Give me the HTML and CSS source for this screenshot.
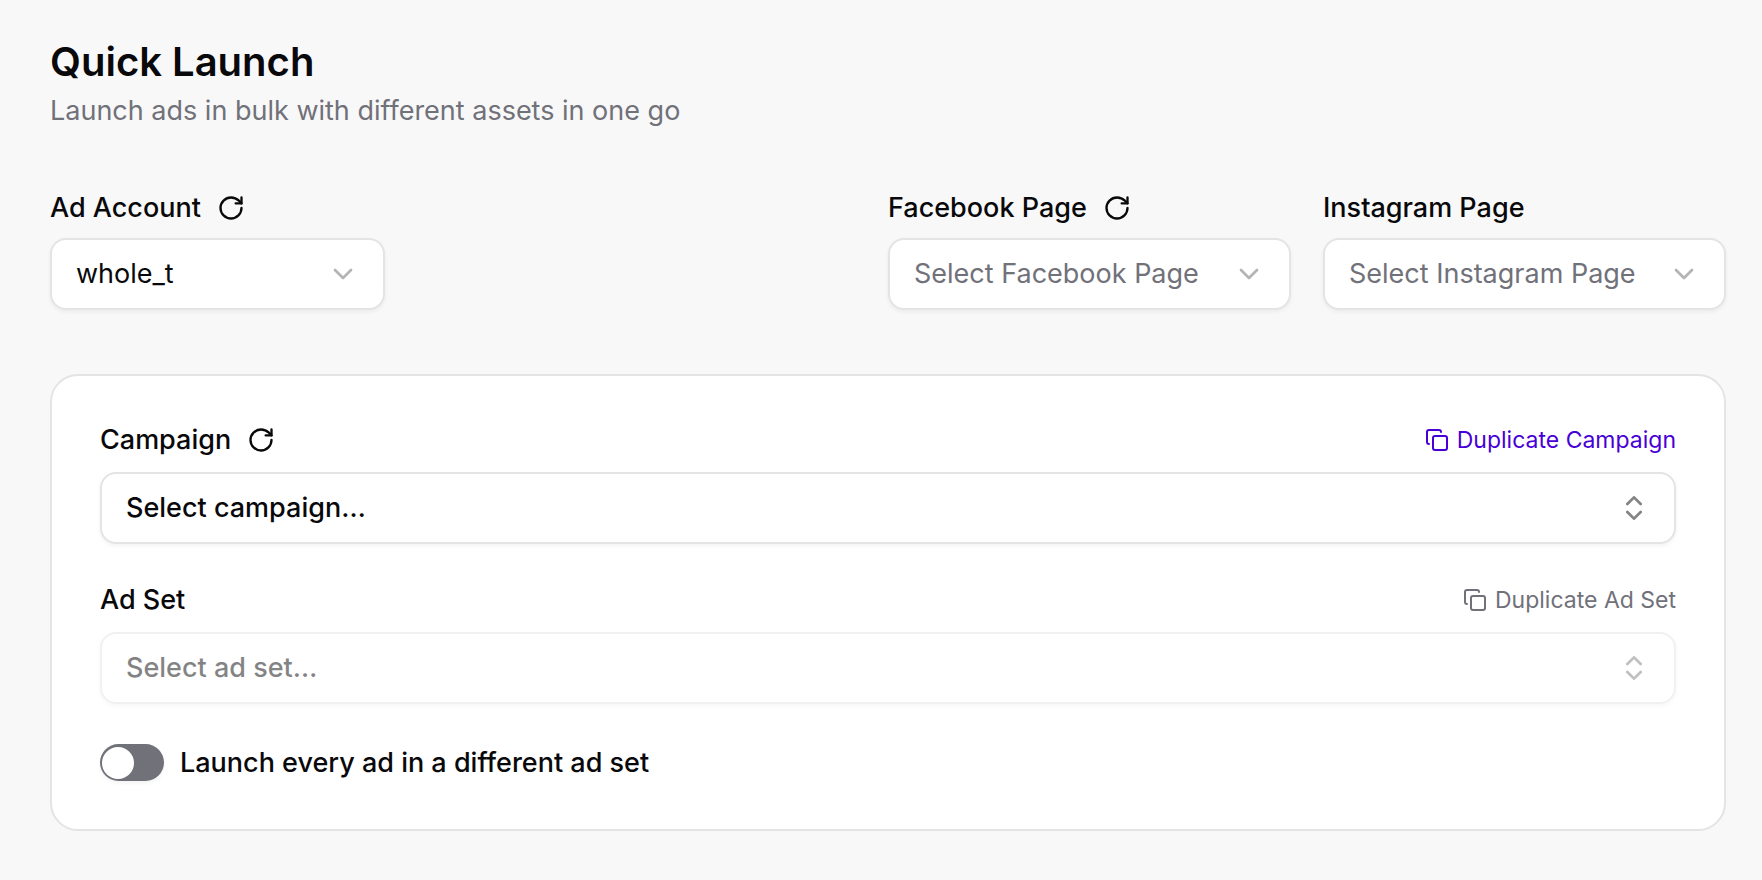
FILE: index.html
```
<!DOCTYPE html>
<html lang="en">
<head>
<meta charset="utf-8">
<meta name="viewport" content="width=device-width, initial-scale=1">
<title>Quick Launch</title>
<link rel="stylesheet" href="styles.css">
</head>
<body>
<svg class="sprite" aria-hidden="true">
  <symbol id="refresh" viewBox="0 0 24 24"><path d="M21 12a9 9 0 1 1-9-9c2.52 0 4.93 1 6.74 2.74L21 8"/><path d="M21 3v5h-5"/></symbol>
  <symbol id="copy" viewBox="0 0 24 24"><rect x="8" y="8" width="14" height="14" rx="2"/><path d="M4 16c-1.1 0-2-.9-2-2V4c0-1.1.9-2 2-2h10c1.1 0 2 .9 2 2"/></symbol>
  <symbol id="chevron" viewBox="0 0 24 24"><path d="m6 9 6 6 6-6"/></symbol>
  <symbol id="updown" viewBox="0 0 24 24"><path d="m7 15 5 5 5-5"/><path d="m7 9 5-5 5 5"/></symbol>
</svg>
<main class="page">
  <header class="header">
    <h1 class="title">Quick Launch</h1>
    <p class="subtitle">Launch ads in bulk with different assets in one go</p>
  </header>

  <section class="accounts">
    <div class="field field-account">
      <div class="label-row">
        <label class="label" for="account">Ad Account</label>
        <button class="refresh" type="button" aria-label="Refresh ad accounts"><svg class="icon icon-refresh"><use href="#refresh"/></svg></button>
      </div>
      <div class="select-wrap">
        <select class="select" id="account"><option>whole_t</option></select>
        <svg class="icon chevron"><use href="#chevron"/></svg>
      </div>
    </div>
    <div class="pages">
      <div class="field field-page">
        <div class="label-row">
          <label class="label" for="facebook">Facebook Page</label>
          <button class="refresh" type="button" aria-label="Refresh Facebook pages"><svg class="icon icon-refresh"><use href="#refresh"/></svg></button>
        </div>
        <div class="select-wrap">
          <select class="select select-empty" id="facebook"><option>Select Facebook Page</option></select>
          <svg class="icon chevron"><use href="#chevron"/></svg>
        </div>
      </div>
      <div class="field field-page">
        <div class="label-row">
          <label class="label" for="instagram">Instagram Page</label>
        </div>
        <div class="select-wrap">
          <select class="select select-empty" id="instagram"><option>Select Instagram Page</option></select>
          <svg class="icon chevron"><use href="#chevron"/></svg>
        </div>
      </div>
    </div>
  </section>

  <section class="card">
    <div class="card-field">
      <div class="label-row">
        <label class="label" for="campaign">Campaign</label>
        <button class="refresh" type="button" aria-label="Refresh campaigns"><svg class="icon icon-refresh"><use href="#refresh"/></svg></button>
        <button class="duplicate" type="button"><svg class="icon icon-copy"><use href="#copy"/></svg>Duplicate Campaign</button>
      </div>
      <button class="combobox" id="campaign" type="button" role="combobox" aria-expanded="false">Select campaign…<svg class="icon updown"><use href="#updown"/></svg></button>
    </div>
    <div class="card-field">
      <div class="label-row">
        <label class="label" for="adset">Ad Set</label>
        <button class="duplicate" type="button" disabled><svg class="icon icon-copy"><use href="#copy"/></svg>Duplicate Ad Set</button>
      </div>
      <button class="combobox" id="adset" type="button" role="combobox" aria-expanded="false" disabled>Select ad set…<svg class="icon updown"><use href="#updown"/></svg></button>
    </div>
    <div class="switch-row">
      <input class="switch" id="split" type="checkbox" role="switch">
      <label class="label" for="split">Launch every ad in a different ad set</label>
    </div>
  </section>
</main>
</body>
</html>
```
FILE: styles.css
```
*, *::before, *::after { box-sizing: border-box; }

body {
  margin: 0;
  background: #f8f8f8;
  color: #09090b;
  font-family: Inter, "Liberation Sans", sans-serif;
  font-size: 27px;
  line-height: 32px;
}

button, select { font: inherit; color: inherit; }
button { margin: 0; padding: 0; border: 0; background: none; cursor: pointer; }

.sprite { display: none; }
.icon {
  flex: none;
  fill: none;
  stroke: currentColor;
  stroke-width: 2;
  stroke-linecap: round;
  stroke-linejoin: round;
}

.page { padding: 42px 36px 48px 50px; }

.header { margin-bottom: 64px; }
.title { margin: 0; font-size: 40px; font-weight: 600; line-height: 40px; }
.subtitle { margin: 12px 0 0; color: #71717a; line-height: 34px; }

.accounts {
  display: flex;
  justify-content: space-between;
  gap: 32px;
  margin-bottom: 64px;
}
.field { display: flex; flex-direction: column; gap: 14px; }
.field-account { width: 335px; }
.pages { display: flex; gap: 32px; }
.field-page { width: 403px; }

.label-row { display: flex; align-items: center; gap: 16px; height: 32px; }
.label { font-weight: 500; }
.refresh { display: flex; }
.icon-refresh { width: 28px; height: 28px; }

.select-wrap { display: grid; align-items: center; }
.select-wrap > * { grid-area: 1 / 1; }
.select {
  width: 100%;
  height: 72px;
  padding: 0 72px 0 24px;
  border: 2px solid #e4e4e4;
  border-radius: 16px;
  background: #fff;
  box-shadow: 0 2px 4px rgb(0 0 0 / 5%);
  appearance: none;
}
.select-empty { color: #71717a; }
.chevron {
  justify-self: end;
  width: 32px;
  height: 32px;
  margin-right: 26px;
  opacity: .3;
  pointer-events: none;
}

.card {
  display: flex;
  flex-direction: column;
  gap: 40px;
  padding: 48px;
  border: 2px solid #e4e4e4;
  border-radius: 28px;
  background: #fff;
}
.card-field { display: flex; flex-direction: column; gap: 16px; }
.duplicate {
  display: flex;
  align-items: center;
  gap: 8px;
  margin-left: auto;
  color: #4800d6;
  font-size: 23px;
}
.duplicate:disabled { color: #71717a; cursor: default; }
.icon-copy { width: 24px; height: 24px; }

.combobox {
  display: flex;
  align-items: center;
  justify-content: space-between;
  height: 72px;
  padding: 0 24px;
  border: 2px solid #e4e4e4;
  border-radius: 16px;
  background: #fff;
  box-shadow: 0 2px 4px rgb(0 0 0 / 5%);
  font-weight: 500;
  text-align: left;
}
.combobox:disabled { opacity: .5; cursor: default; }
.updown { width: 32px; height: 32px; opacity: .5; }

.switch-row { display: flex; align-items: center; gap: 16px; }
.switch {
  display: flex;
  align-items: center;
  width: 64px;
  height: 37px;
  margin: 0;
  padding: 0 2px;
  border-radius: 19px;
  background: #71717a;
  box-shadow: 0 2px 4px rgb(0 0 0 / 5%);
  appearance: none;
  cursor: pointer;
}
.switch::before { content: ""; width: 32px; height: 32px; border-radius: 50%; background: #fff; }
.switch:checked { justify-content: flex-end; background: #4800d6; }
```
